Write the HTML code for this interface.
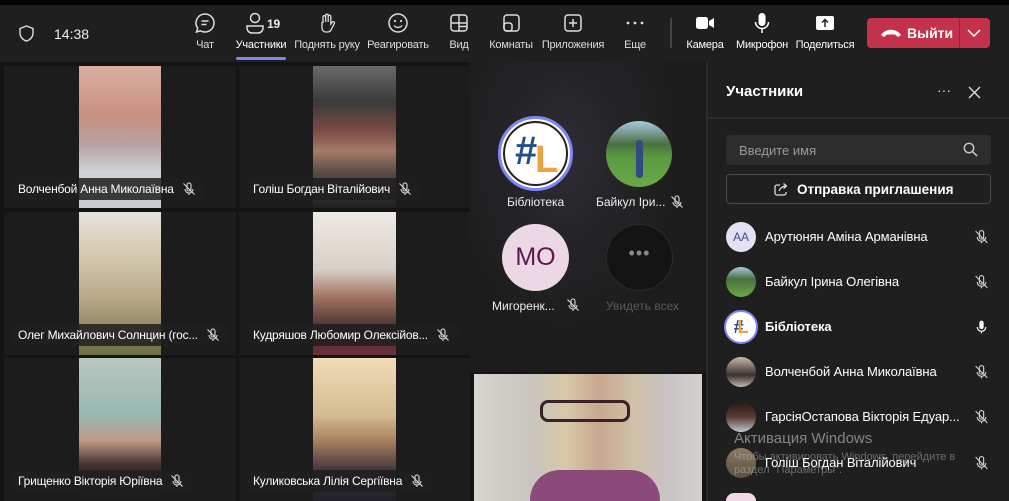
<!DOCTYPE html>
<html><head><meta charset="utf-8"><style>
*{margin:0;padding:0;box-sizing:border-box}
html,body{width:1009px;height:501px;overflow:hidden}
body{background:#141414;font-family:"Liberation Sans","DejaVu Sans",sans-serif;color:#fff}
#w{position:relative;width:1009px;height:501px;overflow:hidden}
.a{position:absolute}
.top{left:0;top:0;width:1009px;height:62px;background:#1f1f1f;border-top:5px solid #050505}
.tb{position:absolute;top:12px;text-align:center;font-size:11px;color:#ddd;width:70px;letter-spacing:-0.2px}
.tb svg{display:block;margin:0 auto 5px;}
.tile{background:#1c1c1c}
.lbl{position:absolute;background:rgba(30,30,30,.85);border-radius:4px;height:22px;font-size:12px;letter-spacing:-0.2px;line-height:22px;padding:0 8px 0 6px;color:#fff;white-space:nowrap;display:flex;align-items:center}
.lbl svg{margin-left:8px}
.row{position:absolute;left:726px;height:32px;width:270px;font-size:13px;line-height:30px;letter-spacing:-0.1px}
.av{position:absolute;left:0;top:0;width:30px;height:30px;border-radius:50%}
.row .n{position:absolute;left:39px;top:0;white-space:nowrap}
.row svg{position:absolute;left:248px;top:7px}
</style></head><body><div id="w">
<div class="a top"></div>
<svg class="a" style="left:19px;top:25px" width="15" height="17" viewBox="0 0 15 17"><path d="M7.5 1 L14 3.5 V8 C14 12 11 15 7.5 16 C4 15 1 12 1 8 V3.5 Z" fill="none" stroke="#ddd" stroke-width="1.4"/></svg>
<div class="a" style="left:54px;top:26px;font-size:14px;color:#eee">14:38</div>

<div class="tb" style="left:170px"><svg width="22" height="22" viewBox="0 0 22 22"><path d="M11 2a9 9 0 1 1-4.5 16.8L2.5 20l1.2-3.8A9 9 0 0 1 11 2z" fill="none" stroke="#ddd" stroke-width="1.5"/><path d="M7.5 9h7M7.5 12.5h5" stroke="#ddd" stroke-width="1.4"/></svg>Чат</div>
<div class="tb" style="left:226px;width:70px"><svg width="40" height="22" viewBox="0 0 40 22"><circle cx="14" cy="6" r="4.5" fill="none" stroke="#ddd" stroke-width="1.5"/><path d="M6 14h16v2a5 5 0 0 1-5 5h-6a5 5 0 0 1-5-5z" fill="none" stroke="#ddd" stroke-width="1.5"/><text x="26" y="16" font-size="12" font-weight="bold" fill="#eee" font-family="Liberation Sans">19</text></svg><span style="color:#fff">Участники</span></div>
<div class="a" style="left:236px;top:57px;width:50px;height:3px;background:#7f85f5;border-radius:2px"></div>
<div class="tb" style="left:291px;width:72px"><svg width="22" height="22" viewBox="0 0 22 22"><path d="M7 11V5a1.3 1.3 0 0 1 2.6 0v5V3.5a1.3 1.3 0 0 1 2.6 0V10V4.5a1.3 1.3 0 0 1 2.6 0V12l1.5-2a1.3 1.3 0 0 1 2 1.6L15 18a4 4 0 0 1-3.5 2H10a4 4 0 0 1-4-4v-5a1 1 0 0 1 1-1z" fill="none" stroke="#ddd" stroke-width="1.3"/></svg>Поднять руку</div>
<div class="tb" style="left:363px"><svg width="22" height="22" viewBox="0 0 22 22"><circle cx="11" cy="11" r="9" fill="none" stroke="#ddd" stroke-width="1.5"/><circle cx="8" cy="9" r="1.1" fill="#ddd"/><circle cx="14" cy="9" r="1.1" fill="#ddd"/><path d="M7 13.5c2 2.5 6 2.5 8 0" fill="none" stroke="#ddd" stroke-width="1.4"/></svg>Реагировать</div>
<div class="tb" style="left:424px"><svg width="22" height="22" viewBox="0 0 22 22"><rect x="3" y="3" width="16" height="16" rx="3" fill="none" stroke="#ddd" stroke-width="1.5"/><path d="M11 3v16M3 11h16M11 14.5h8" stroke="#ddd" stroke-width="1.4"/></svg>Вид</div>
<div class="tb" style="left:476px"><svg width="22" height="22" viewBox="0 0 22 22"><rect x="4" y="3" width="15" height="16" rx="3" fill="none" stroke="#ddd" stroke-width="1.5"/><rect x="4" y="11" width="8" height="8" rx="2.5" fill="none" stroke="#ddd" stroke-width="1.5"/></svg>Комнаты</div>
<div class="tb" style="left:538px"><svg width="22" height="22" viewBox="0 0 22 22"><rect x="3" y="3" width="16" height="16" rx="3" fill="none" stroke="#ddd" stroke-width="1.5"/><path d="M11 7v8M7 11h8" stroke="#ddd" stroke-width="1.5"/></svg>Приложения</div>
<div class="tb" style="left:600px"><svg width="22" height="22" viewBox="0 0 22 22"><circle cx="4" cy="11" r="1.4" fill="#ddd"/><circle cx="11" cy="11" r="1.4" fill="#ddd"/><circle cx="18" cy="11" r="1.4" fill="#ddd"/></svg>Еще</div>
<div class="a" style="left:670px;top:18px;width:2px;height:30px;background:#444"></div>
<div class="tb" style="left:670px"><svg width="22" height="22" viewBox="0 0 22 22"><rect x="2" y="5" width="12" height="12" rx="2.5" fill="#fff"/><path d="M15 9l5-3v10l-5-3z" fill="#fff"/></svg><span style="color:#fff">Камера</span></div>
<div class="tb" style="left:727px"><svg width="22" height="22" viewBox="0 0 22 22"><rect x="7.5" y="1" width="7" height="13" rx="3.5" fill="#fff"/><path d="M4.5 10a6.5 6.5 0 0 0 13 0M11 17v4" fill="none" stroke="#fff" stroke-width="1.5"/></svg><span style="color:#fff">Микрофон</span></div>
<div class="tb" style="left:790px"><svg width="22" height="22" viewBox="0 0 22 22"><rect x="2" y="4" width="18" height="14" rx="2" fill="#fff"/><path d="M11 15V8M8 10.5l3-3 3 3" fill="none" stroke="#222" stroke-width="1.5"/></svg><span style="color:#fff">Поделиться</span></div>
<div class="a" style="left:867px;top:18px;width:123px;height:30px;background:#c4314b;border-radius:4px"></div>
<div class="a" style="left:959px;top:18px;width:1px;height:30px;background:#a02038"></div>
<svg class="a" style="left:880px;top:28px" width="22" height="10" viewBox="0 0 22 10"><path d="M1 7c5-7 15-7 20 0l-3 2-3-2.5h-8L4 9z" fill="#fff"/></svg>
<div class="a" style="left:907px;top:25px;font-size:14px;font-weight:bold">Выйти</div>
<svg class="a" style="left:967px;top:29px" width="14" height="8" viewBox="0 0 14 8"><path d="M1 1l6 6 6-6" fill="none" stroke="#fff" stroke-width="1.5"/></svg>

<!-- stage -->
<div class="a" style="left:0;top:62px;width:706px;height:439px;background:#141414"></div>
<div class="a" style="left:470px;top:62px;width:236px;height:310px;background:radial-gradient(ellipse at 40% 30%,#2c2c33 0%,#1c1c1c 60%)"></div>

<div class="a tile" style="left:4px;top:66px;width:232px;height:142px"></div>
<div class="a tile" style="left:239px;top:66px;width:231px;height:142px"></div>
<div class="a tile" style="left:4px;top:212px;width:232px;height:143px"></div>
<div class="a tile" style="left:239px;top:212px;width:231px;height:143px"></div>
<div class="a tile" style="left:4px;top:358px;width:232px;height:143px"></div>
<div class="a tile" style="left:239px;top:358px;width:231px;height:143px"></div>

<div class="a" style="left:79px;top:66px;width:82px;height:142px;background:linear-gradient(180deg,#d9b0a0 0%,#c99080 35%,#b8a0a0 55%,#d0d4d8 75%,#c8ccd0 100%)"></div>
<div class="a" style="left:313px;top:66px;width:83px;height:142px;background:linear-gradient(180deg,#6a6a6a 0%,#3a3a3a 25%,#7a4a45 45%,#a47a68 60%,#5a4a45 75%,#1f1f24 100%)"></div>
<div class="a" style="left:79px;top:212px;width:82px;height:143px;background:linear-gradient(180deg,#e8e4dc 0%,#d0c4a8 35%,#b8a888 60%,#8c8060 85%,#6a7040 100%)"></div>
<div class="a" style="left:313px;top:212px;width:83px;height:143px;background:linear-gradient(180deg,#eeeae4 0%,#d8d0c8 40%,#a07060 60%,#4a3430 80%,#6a3038 100%)"></div>
<div class="a" style="left:79px;top:358px;width:82px;height:143px;background:linear-gradient(180deg,#b8c8c0 0%,#98b8b0 40%,#c09888 58%,#403030 75%,#1a1a1a 100%)"></div>
<div class="a" style="left:313px;top:358px;width:83px;height:143px;background:linear-gradient(180deg,#f0dcb8 0%,#d4bc90 40%,#a88060 58%,#3a3038 80%,#202028 100%)"></div>
<div class="a" style="left:474px;top:374px;width:228px;height:127px;background:linear-gradient(90deg,#d8d4d0 0%,#c8c4c0 25%,#d8c8a8 40%,#c8a890 55%,#d0c0a8 70%,#c8c4c4 85%,#d4d0cc 100%)"></div>
<div class="a" style="left:540px;top:400px;width:90px;height:22px;border:3px solid #3a2028;border-radius:8px"></div>
<div class="a" style="left:530px;top:470px;width:130px;height:31px;background:#8a4a7a;border-radius:30px 30px 0 0"></div>

<div class="lbl" style="left:12px;top:178px">Волченбой Анна Миколаївна<svg width="14" height="14" viewBox="0 0 14 14"><rect x="5" y="1" width="4" height="8" rx="2" fill="none" stroke="#ddd" stroke-width="1.1"/><path d="M3 7a4 4 0 0 0 8 0M7 11v2M1.5 1.5l11 11" fill="none" stroke="#ddd" stroke-width="1.1"/></svg></div>
<div class="lbl" style="left:247px;top:178px">Голіш Богдан Віталійович<svg width="14" height="14" viewBox="0 0 14 14"><rect x="5" y="1" width="4" height="8" rx="2" fill="none" stroke="#ddd" stroke-width="1.1"/><path d="M3 7a4 4 0 0 0 8 0M7 11v2M1.5 1.5l11 11" fill="none" stroke="#ddd" stroke-width="1.1"/></svg></div>
<div class="lbl" style="left:12px;top:324px">Олег Михайлович Солнцин (гос...<svg width="14" height="14" viewBox="0 0 14 14"><rect x="5" y="1" width="4" height="8" rx="2" fill="none" stroke="#ddd" stroke-width="1.1"/><path d="M3 7a4 4 0 0 0 8 0M7 11v2M1.5 1.5l11 11" fill="none" stroke="#ddd" stroke-width="1.1"/></svg></div>
<div class="lbl" style="left:247px;top:324px">Кудряшов Любомир Олексійов...<svg width="14" height="14" viewBox="0 0 14 14"><rect x="5" y="1" width="4" height="8" rx="2" fill="none" stroke="#ddd" stroke-width="1.1"/><path d="M3 7a4 4 0 0 0 8 0M7 11v2M1.5 1.5l11 11" fill="none" stroke="#ddd" stroke-width="1.1"/></svg></div>
<div class="lbl" style="left:12px;top:470px">Грищенко Вікторія Юріївна<svg width="14" height="14" viewBox="0 0 14 14"><rect x="5" y="1" width="4" height="8" rx="2" fill="none" stroke="#ddd" stroke-width="1.1"/><path d="M3 7a4 4 0 0 0 8 0M7 11v2M1.5 1.5l11 11" fill="none" stroke="#ddd" stroke-width="1.1"/></svg></div>
<div class="lbl" style="left:247px;top:470px">Куликовська Лілія Сергіївна<svg width="14" height="14" viewBox="0 0 14 14"><rect x="5" y="1" width="4" height="8" rx="2" fill="none" stroke="#ddd" stroke-width="1.1"/><path d="M3 7a4 4 0 0 0 8 0M7 11v2M1.5 1.5l11 11" fill="none" stroke="#ddd" stroke-width="1.1"/></svg></div>

<!-- avatars in stage -->
<div class="a" style="left:498px;top:116px;width:75px;height:75px;border-radius:50%;border:3px solid #7f85f5;background:#fff;padding:2px"><div style="width:100%;height:100%;border-radius:50%;border:2px solid #222;position:relative;overflow:hidden"><div style="position:absolute;left:10px;top:8px;font:bold 40px 'Liberation Sans';color:#1f4e8c;line-height:40px">#</div><div style="position:absolute;left:30px;top:18px;font:bold 38px 'Liberation Sans';color:#f0a040;line-height:38px">L</div></div></div>
<div class="a" style="left:507px;top:195px;font-size:12px;color:#eee">Бібліотека</div>
<div class="a" style="left:606px;top:121px;width:66px;height:66px;border-radius:50%;background:linear-gradient(180deg,#a8c8e0 0%,#4a7040 35%,#5a9a40 55%,#6aa848 100%)"></div>
<div class="a" style="left:636px;top:140px;width:7px;height:38px;background:#334a80;border-radius:3px"></div>
<div class="a" style="left:596px;top:195px;font-size:12px;color:#eee">Байкул Іри...</div>
<svg class="a" style="left:670px;top:195px" width="14" height="14" viewBox="0 0 14 14"><rect x="5" y="1" width="4" height="8" rx="2" fill="none" stroke="#ddd" stroke-width="1.1"/><path d="M3 7a4 4 0 0 0 8 0M7 11v2M1.5 1.5l11 11" fill="none" stroke="#ddd" stroke-width="1.1"/></svg>
<div class="a" style="left:502px;top:224px;width:67px;height:67px;border-radius:50%;background:#ecd7e4;color:#5a1a4a;font-size:25px;text-align:center;line-height:67px">МО</div>
<div class="a" style="left:492px;top:299px;font-size:12px;color:#eee">Мигоренк...</div>
<svg class="a" style="left:566px;top:298px" width="14" height="14" viewBox="0 0 14 14"><rect x="5" y="1" width="4" height="8" rx="2" fill="none" stroke="#ddd" stroke-width="1.1"/><path d="M3 7a4 4 0 0 0 8 0M7 11v2M1.5 1.5l11 11" fill="none" stroke="#ddd" stroke-width="1.1"/></svg>
<div class="a" style="left:606px;top:224px;width:67px;height:67px;border-radius:50%;background:#141414;border:1px solid #2a2a2a;color:#888;text-align:center;line-height:56px;font-size:18px;letter-spacing:1px">•••</div>
<div class="a" style="left:606px;top:299px;font-size:12px;color:#5a5a5a">Увидеть всех</div>

<!-- panel -->
<div class="a" style="left:706px;top:62px;width:303px;height:439px;background:#1f1f1f;border-left:2px solid #2a2a2a"></div>
<div class="a" style="left:708px;top:117px;width:301px;height:2px;background:#2c2c2c"></div>
<div class="a" style="left:726px;top:83px;font-size:15px;font-weight:bold">Участники</div>
<div class="a" style="left:937px;top:82px;font-size:14px;color:#ddd">···</div>
<svg class="a" style="left:968px;top:86px" width="13" height="13" viewBox="0 0 13 13"><path d="M1 1l11 11M12 1L1 12" stroke="#ddd" stroke-width="1.4"/></svg>
<div class="a" style="left:726px;top:135px;width:265px;height:30px;background:#2d2d2d;border-radius:4px"></div>
<div class="a" style="left:739px;top:143px;font-size:13px;color:#9a9a9a">Введите имя</div>
<svg class="a" style="left:963px;top:142px" width="15" height="15" viewBox="0 0 15 15"><circle cx="6" cy="6" r="4.7" fill="none" stroke="#ccc" stroke-width="1.4"/><path d="M9.5 9.5l4.5 4.5" stroke="#ccc" stroke-width="1.5"/></svg>
<div class="a" style="left:726px;top:174px;width:265px;height:30px;border:1px solid #4a4a4a;border-radius:4px;background:#1f1f1f"></div>
<svg class="a" style="left:774px;top:182px" width="15" height="14" viewBox="0 0 15 14"><path d="M6 3H3a2 2 0 0 0-2 2v6a2 2 0 0 0 2 2h7a2 2 0 0 0 2-2v-1" fill="none" stroke="#ddd" stroke-width="1.3"/><path d="M5 9c1-3 4-5 7-5M9.5 1.5L12.5 4 9.5 6.5" fill="none" stroke="#ddd" stroke-width="1.3"/></svg>
<div class="a" style="left:797px;top:182px;font-size:13.5px;font-weight:bold">Отправка приглашения</div>

<div class="row" style="top:222px"><div class="av" style="background:#e4e1f4;color:#444791;font-size:12px;text-align:center;line-height:30px">AA</div><span class="n">Арутюнян Аміна Арманівна</span><svg width="15" height="16" viewBox="0 0 14 14"><rect x="5" y="1" width="4" height="8" rx="2" fill="none" stroke="#ccc" stroke-width="1.1"/><path d="M3 7a4 4 0 0 0 8 0M7 11v2M1.5 1.5l11 11" fill="none" stroke="#ccc" stroke-width="1.1"/></svg></div>
<div class="row" style="top:267px"><div class="av" style="background:linear-gradient(180deg,#a8c8e0,#4a7040 40%,#6aa848)"></div><span class="n">Байкул Ірина Олегівна</span><svg width="15" height="16" viewBox="0 0 14 14"><rect x="5" y="1" width="4" height="8" rx="2" fill="none" stroke="#ccc" stroke-width="1.1"/><path d="M3 7a4 4 0 0 0 8 0M7 11v2M1.5 1.5l11 11" fill="none" stroke="#ccc" stroke-width="1.1"/></svg></div>
<div class="row" style="top:312px"><div class="av" style="left:-2px;top:-2px;width:34px;height:34px;border:2px solid #7f85f5;background:#fff;font:bold 18px 'Liberation Sans';color:#1f4e8c;text-align:center;line-height:30px">#<span style="color:#f0a040;margin-left:-6px">L</span></div><span class="n" style="font-weight:bold">Бібліотека</span><svg width="15" height="16" viewBox="0 0 14 14"><rect x="5" y="1" width="4" height="8" rx="2" fill="#fff"/><path d="M3 7a4 4 0 0 0 8 0M7 11v2" fill="none" stroke="#fff" stroke-width="1.1"/></svg></div>
<div class="row" style="top:357px"><div class="av" style="background:linear-gradient(180deg,#c8b8a8,#3a3030 60%,#c0b8b0)"></div><span class="n">Волченбой Анна Миколаївна</span><svg width="15" height="16" viewBox="0 0 14 14"><rect x="5" y="1" width="4" height="8" rx="2" fill="none" stroke="#ccc" stroke-width="1.1"/><path d="M3 7a4 4 0 0 0 8 0M7 11v2M1.5 1.5l11 11" fill="none" stroke="#ccc" stroke-width="1.1"/></svg></div>
<div class="row" style="top:402px"><div class="av" style="background:linear-gradient(180deg,#2a1a1a,#5a3a30 50%,#c0c8d0)"></div><span class="n">ГарсіяОстапова Вікторія Едуар...</span><svg width="15" height="16" viewBox="0 0 14 14"><rect x="5" y="1" width="4" height="8" rx="2" fill="none" stroke="#ccc" stroke-width="1.1"/><path d="M3 7a4 4 0 0 0 8 0M7 11v2M1.5 1.5l11 11" fill="none" stroke="#ccc" stroke-width="1.1"/></svg></div>
<div class="row" style="top:448px"><div class="av" style="background:linear-gradient(180deg,#8a7a60,#5a5040)"></div><span class="n">Голіш Богдан Віталійович</span><svg width="15" height="16" viewBox="0 0 14 14"><rect x="5" y="1" width="4" height="8" rx="2" fill="none" stroke="#ccc" stroke-width="1.1"/><path d="M3 7a4 4 0 0 0 8 0M7 11v2M1.5 1.5l11 11" fill="none" stroke="#ccc" stroke-width="1.1"/></svg></div>
<div class="a" style="left:726px;top:493px;width:30px;height:8px;border-radius:15px 15px 0 0;background:#f0d8e4"></div>
<div class="a" style="left:734px;top:430px;font-size:15px;color:rgba(200,200,200,.6)">Активация Windows</div>
<div class="a" style="left:734px;top:451px;font-size:11px;color:rgba(200,200,200,.45);line-height:13px;width:250px">Чтобы активировать Windows, перейдите в раздел "Параметры".</div>
</div></body></html>
